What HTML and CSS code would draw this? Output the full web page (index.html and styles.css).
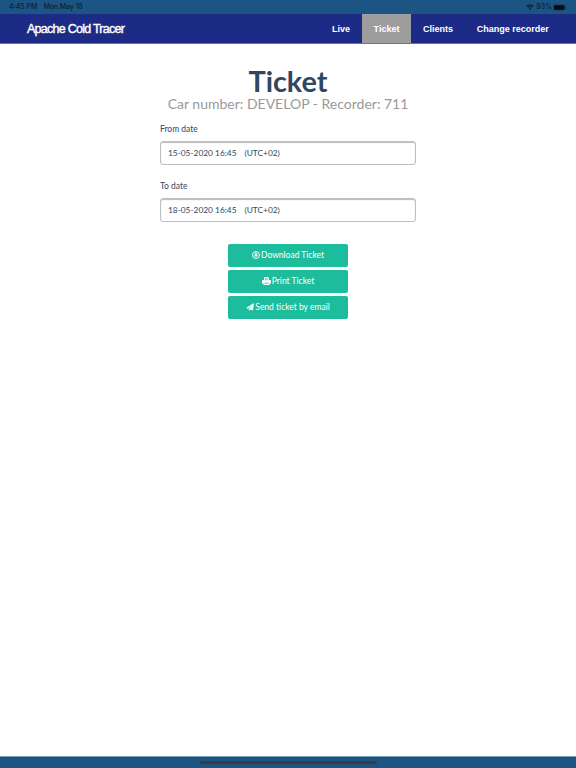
FILE: index.html
```html
<!DOCTYPE html>
<html lang="en">
<head>
  <meta charset="UTF-8" />
  <meta name="viewport" content="width=device-width, initial-scale=1.0" />
  <title>Apache Cold Tracer</title>
  <link rel="stylesheet" href="styles.css">
</head>
<body>
  <!-- Status bar -->
  <div class="status-bar">
    <div class="status-left"><span>4:45 PM</span><span>Mon May 18</span></div>
    <div class="status-right">
      <svg class="wifi" viewBox="0 0 16 12"><path d="M1 4.500a10 10 0 0 1 14 0M3.500 7a6.500 6.500 0 0 1 9 0" fill="none" stroke="currentColor" stroke-width="2.600"/><path d="M5.500 9a3.600 3.600 0 0 1 5 0L8 11.800z" fill="currentColor"/></svg>
      <span class="percent">93%</span>
      <svg class="battery" viewBox="0 0 28 14"><rect x=".7" y="1.2" width="24" height="11.6" rx="3.2" fill="none" stroke="currentColor" opacity=".5"/><rect x="2" y="2.4" width="21" height="9.2" rx="2" fill="#050a10"/><path d="M26 5v4c2-.8 2-3.2 0-4z" fill="currentColor" opacity=".5"/></svg>
    </div>
  </div>

  <nav class="navbar">
    <a class="brand">Apache Cold Tracer</a>
    <div class="menu">
      <a>Live</a>
      <a class="active">Ticket</a>
      <a>Clients</a>
      <a>Change recorder</a>
    </div>
  </nav>

  <main class="content">
    <h1>Ticket</h1>
    <h2>Car number: DEVELOP - Recorder: 711</h2>

    <label for="from">From date</label>
    <div class="date-input" id="from"><span>15-05-2020 16:45</span><span>(UTC+02)</span></div>
    <label for="to">To date</label>
    <div class="date-input" id="to"><span>18-05-2020 16:45</span><span>(UTC+02)</span></div>

    <div class="buttons">
      <button>
        <svg class="download" viewBox="0 0 16 16"><circle cx="8" cy="8" r="6.9" fill="none" stroke="currentColor" stroke-width="2"/><path d="M6.400 3.500h3.200v4h2.600L8 12.400 3.800 7.500h2.600z" fill="currentColor"/></svg>
        <span>Download Ticket</span>
      </button>
      <button>
        <svg class="print" viewBox="0 0 18 16"><path d="M4 6V0h7.500L14 2.500V6h2q2 0 2 2v5h-3v3H3v-3H0V8q0-2 2-2z" fill="currentColor"/><path d="M5.500 2h5v2h2v2.500h-7zM5 11h8v3H5z" fill="#1dbc9c" opacity=".55"/></svg>
        <span>Print Ticket</span>
      </button>
      <button>
        <svg class="send" viewBox="0 0 16 16"><path d="M16 0 0 10l4.200 1.500L13.500 2.800 5.600 12V16l2.400-3 6 2z" fill="currentColor"/></svg>
        <span>Send ticket by email</span>
      </button>
    </div>
  </main>

  <!-- Bottom bar -->
  <div class="bottom-bar"><div class="home-line"></div></div>
</body>
</html>
```
FILE: styles.css
```css
* { margin: 0; padding: 0; box-sizing: border-box; }
body {
  display: flex;
  flex-direction: column;
  height: 100vh;
  overflow: hidden;
  background-color: #fff;
  color: #2f475f;
  font-family: Lato, sans-serif;
  font-variant-ligatures: none;
}
.status-bar {
  display: flex;
  justify-content: space-between;
  height: 14px;
  padding: 0 9px;
  background-color: #1c5583;
  color: #0b2136;
  font: 500 7px/14px Inter, sans-serif;
}
.status-left { display: flex; gap: 6px; }
.status-left span:last-child { letter-spacing: -0.1px; }
.status-right { display: flex; align-items: center; }
.wifi { width: 8px; height: 6px; margin-right: 2px; }
.percent { margin-right: 1px; }
.battery { width: 14px; height: 7px; }
.navbar {
  display: flex;
  justify-content: space-between;
  height: 30px;
  padding: 0 15.5px 0 27px;
  border-bottom: 1px solid #6970ae;
  background-color: #1c2c86;
  color: #fff;
  font-family: "Liberation Sans", sans-serif;
  line-height: 30px;
}
.brand { font: 500 12.5px/30px "Liberation Sans", sans-serif; letter-spacing: -0.74px; -webkit-text-stroke: 0.4px #fff; }
.menu { display: flex; font-size: 9px; font-weight: bold; }
.menu a { height: 29px; padding: 0 11.8px; }
.menu .active { background-color: #9d9d9d; }
.content { flex: 1; width: 256px; margin: 0 auto; padding-top: 21px; }
h1 { font-size: 28.8px; line-height: 32px; text-align: center; }
h2 {
  color: #999;
  font-size: 14px;
  font-weight: normal;
  line-height: 14px;
  text-align: center;
  white-space: nowrap;
}
label { display: block; margin-top: 11px; font-size: 8.5px; line-height: 14px; }
.date-input {
  display: flex;
  gap: 8px;
  height: 24px;
  margin: 5px 0 14px;
  padding: 0 7px;
  border: 1px solid #bbc0c3;
  border-radius: 3px;
  box-shadow: inset 0 1px 1px #bbb;
  font-size: 8.35px;
  line-height: 22px;
}
.date-input + label { margin-top: 0; }
.buttons { display: flex; flex-direction: column; gap: 3px; width: 120px; margin: 22px auto 0; }
button {
  display: flex;
  align-items: center;
  justify-content: center;
  gap: 1px;
  height: 23px;
  border: 0;
  border-radius: 2px;
  background-color: #1dbc9c;
  color: #fff;
  font: 8.5px/23px Lato, sans-serif;
  font-variant-ligatures: none;
}
button svg { width: 8px; height: 8px; margin-top: -1px; }
button .print { width: 9px; }
.bottom-bar {
  display: flex;
  justify-content: center;
  height: 12px;
  padding-top: 4px;
  border-top: 1px solid #76a0b8;
  background-color: #1c5583;
}
.home-line { width: 177px; height: 3px; border-radius: 2px; background-color: #3a3b3e; }
```
